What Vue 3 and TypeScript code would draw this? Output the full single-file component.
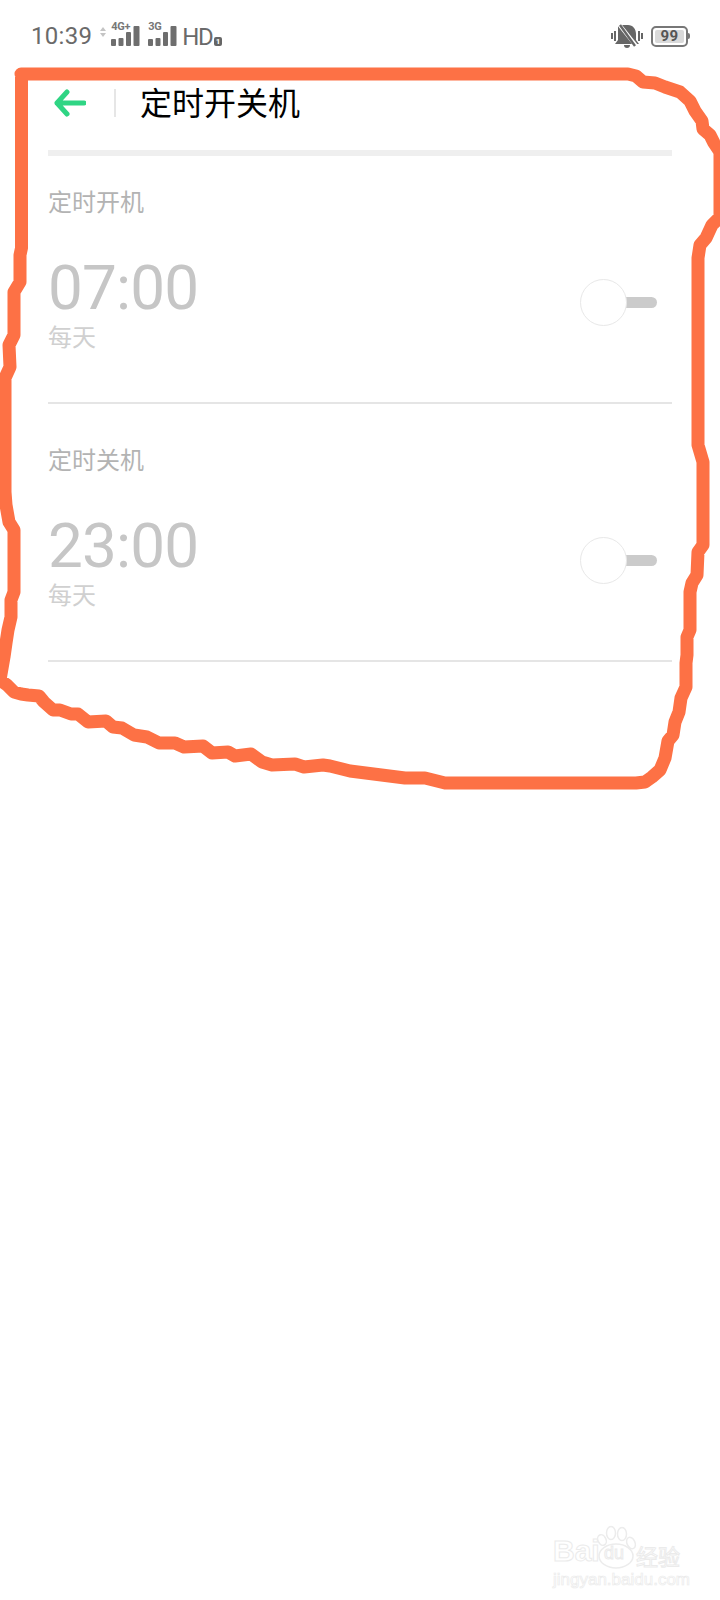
<template>
  <div class="screen">
    <div class="status-bar">
      <span class="clock">10:39</span>
      <svg class="updown" width="8" height="10" viewBox="0 0 8 10">
        <path d="M4 0 L7 4 H1 Z M4 10 L7 6 H1 Z" fill="#c4c4c4" />
      </svg>
      <div v-for="net in networks" :key="net.label" class="signal">
        <span class="net-label">{{ net.label }}</span>
        <svg width="29" height="20" viewBox="0 0 29 20">
          <rect x="0" y="13" width="5" height="7" rx="1" fill="#6e6e6e" />
          <rect x="7.5" y="12" width="5" height="8" rx="1" fill="#6e6e6e" />
          <rect x="15" y="6" width="5" height="14" rx="1" fill="#6e6e6e" />
          <rect x="22.5" y="0" width="6" height="20" rx="1" fill="#6e6e6e" />
        </svg>
      </div>
      <span class="hd">HD</span>
      <span class="sim">1</span>
      <div class="status-right">
        <svg width="32" height="26" viewBox="0 0 32 26">
          <path d="M6 2 H16 C21 2 24 6 24 11 V17 L27 21 H3 L6 17 Z" transform="translate(1 0)" fill="#666" />
          <path d="M13 22 h6 a3 3 0 0 1 -6 0 Z" fill="#666" />
          <rect x="0" y="10" width="2" height="6" fill="#666" />
          <rect x="3" y="8" width="2" height="10" fill="#666" />
          <rect x="27" y="8" width="2" height="10" fill="#666" />
          <rect x="30" y="10" width="2" height="6" fill="#666" />
          <path d="M7 0 L26 24" stroke="#fff" stroke-width="4" />
          <path d="M9 2 L24 23" stroke="#666" stroke-width="2.4" />
        </svg>
        <div class="battery"><span class="battery-level">99</span></div>
        <span class="battery-nub"></span>
      </div>
    </div>

    <div class="app-bar">
      <svg class="back" width="32" height="28" viewBox="0 0 32 28">
        <path
          d="M13 3 L3 14 L13 25 M3 14 H30"
          fill="none"
          stroke="#2fd584"
          stroke-width="5"
          stroke-linecap="round"
          stroke-linejoin="round"
        />
      </svg>
      <span class="app-bar-sep"></span>
      <h1 class="title">定时开关机</h1>
    </div>
    <div class="top-rule"></div>

    <section v-for="item in schedules" :key="item.label" class="schedule">
      <div class="schedule-label">{{ item.label }}</div>
      <div class="schedule-row">
        <div class="schedule-info">
          <div class="schedule-time">{{ item.time }}</div>
          <div class="schedule-repeat">{{ item.repeat }}</div>
        </div>
        <div class="toggle">
          <span class="toggle-track"></span>
          <span class="toggle-knob"></span>
        </div>
      </div>
    </section>

    <!-- hand drawn annotation on top of the screenshot -->
    <svg class="scribble" width="720" height="1600" viewBox="0 0 720 1600">
      <path :d="scribblePath" fill="none" stroke="#fd7145" stroke-width="13" stroke-linejoin="round" stroke-linecap="round" />
    </svg>

    <div class="watermark">
      <div class="wm-top">
        <span class="wm-bai">Bai</span>
        <svg class="wm-paw" width="40" height="44" viewBox="0 0 40 44">
          <g fill="#fff" stroke="#ececec" stroke-width="1.5">
            <ellipse cx="5" cy="15" rx="4" ry="5.5" transform="rotate(-25 5 15)" />
            <ellipse cx="14" cy="8" rx="4.5" ry="6.5" />
            <ellipse cx="25" cy="9" rx="4.5" ry="6.5" />
            <ellipse cx="34" cy="18" rx="4" ry="6" transform="rotate(-25 34 18)" />
            <ellipse cx="19" cy="31" rx="17" ry="12" />
          </g>
        </svg>
        <span class="wm-du">du</span>
        <span class="wm-cn">经验</span>
      </div>
      <div class="wm-url">jingyan.baidu.com</div>
    </div>
  </div>
</template>

<script setup lang="ts">
interface Schedule {
  label: string
  time: string
  repeat: string
}

const networks = [{ label: '4G+' }, { label: '3G' }]

const schedules: Schedule[] = [
  { label: '定时开机', time: '07:00', repeat: '每天' },
  { label: '定时关机', time: '23:00', repeat: '每天' },
]

const scribblePoints: [number, number][] = [
  [21, 74], [628, 74], [636, 76], [643, 82], [655, 83], [665, 87], [680, 92], [690, 101], [695, 111],
  [702, 121], [703, 129], [710, 135], [714, 143], [720, 152], [720, 217], [712, 225], [706, 238],
  [700, 245], [698, 258], [698, 445], [703, 462], [703, 545], [698, 552], [697, 575], [692, 583],
  [690, 592], [690, 630], [687, 637], [687, 655], [686, 663], [686, 687], [681, 698], [679, 712],
  [675, 722], [673, 735], [668, 741], [665, 758], [660, 770], [652, 777], [645, 782], [636, 783],
  [460, 783], [445, 783], [425, 778], [405, 778], [350, 771], [330, 766], [323, 765], [304, 767],
  [295, 764], [272, 765], [262, 762], [251, 754], [235, 756], [228, 752], [212, 753], [203, 746],
  [184, 747], [175, 743], [159, 743], [147, 737], [134, 735], [122, 728], [113, 727], [106, 721],
  [88, 722], [78, 714], [71, 714], [60, 710], [53, 710], [44, 702], [39, 696], [28, 695], [21, 694],
  [14, 692], [7, 685], [0, 680], [4, 657], [6, 643], [8, 630], [11, 617], [11, 600], [14, 592],
  [14, 530], [9, 522], [6, 505], [5, 492], [5, 378], [10, 367], [9, 345], [14, 335], [14, 292],
  [20, 282], [20, 255], [21.5, 248], [21.5, 74],
]

const scribblePath = 'M' + scribblePoints.map(([x, y]) => `${x} ${y}`).join(' L')
</script>

<style scoped>
.screen {
  position: relative;
  width: 720px;
  height: 1600px;
  overflow: hidden;
  background: #fff;
  font-family: Roboto, "Noto Sans CJK SC", sans-serif;
}

.status-bar {
  height: 72px;
  box-sizing: border-box;
  padding: 0 30px 0 31px;
  display: flex;
  align-items: center;
  color: #6a6a6a;
}

.clock {
  font-size: 24px;
  letter-spacing: 0.3px;
}

.updown {
  margin: -8px 4px 0 7px;
}

.signal {
  position: relative;
  width: 29px;
  height: 20px;
  margin-right: 8px;
  margin-top: 14px;
}

.signal svg {
  position: absolute;
  left: 0;
  top: -7px;
}

.net-label {
  position: absolute;
  left: 0;
  top: -11px;
  font-size: 11px;
  line-height: 10px;
  font-weight: 700;
  letter-spacing: -0.3px;
  color: #777;
  background: #fff;
  padding-right: 1px;
}

.hd {
  font-size: 24px;
  letter-spacing: -1.5px;
  margin-left: -3px;
  margin-top: 2px;
}

.sim {
  width: 8px;
  height: 9px;
  margin: 11px 0 0 2px;
  border-radius: 2px;
  background: #666;
  color: #fff;
  font-size: 8px;
  line-height: 9px;
  font-weight: 700;
  text-align: center;
}

.status-right {
  margin-left: auto;
  display: flex;
  align-items: center;
}

.status-right svg {
  margin-right: 8px;
}

.battery {
  width: 37px;
  height: 21px;
  box-sizing: border-box;
  border: 2px solid #777;
  border-radius: 5px;
  padding: 2px;
  display: flex;
}

.battery-level {
  flex: 1;
  border-radius: 2px;
  background: #d9d9d9;
  color: #555;
  font-size: 15px;
  line-height: 13px;
  font-weight: 700;
  text-align: center;
  letter-spacing: 0.5px;
}

.battery-nub {
  width: 2px;
  height: 6px;
  background: #777;
  border-radius: 0 2px 2px 0;
}

.app-bar {
  height: 62px;
  display: flex;
  align-items: center;
  padding-left: 54px;
}

.back {
  flex: none;
}

.app-bar-sep {
  width: 2px;
  height: 28px;
  margin-left: 28px;
  background: #e6e6e6;
}

.title {
  margin: -5px 0 0 24px;
  font-size: 32px;
  line-height: 44px;
  font-weight: 400;
  color: #000;
  font-family: "Noto Sans CJK SC", sans-serif;
}

.top-rule {
  height: 6px;
  margin: 16px 48px 0;
  background: #efefef;
}

.schedule {
  margin: 0 48px;
  padding: 38px 0 52px;
  border-bottom: 2px solid #e5e5e5;
}

.top-rule + .schedule {
  padding-top: 28px;
}

.schedule-label {
  font-size: 24px;
  line-height: 34px;
  color: #b3b3b3;
  font-family: "Noto Sans CJK SC", sans-serif;
}

.schedule-row {
  margin-top: 36px;
  display: flex;
  align-items: center;
  justify-content: space-between;
}

.schedule-time {
  font-size: 62px;
  line-height: 68px;
  font-weight: 400;
  letter-spacing: -0.8px;
  color: #c6c6c6;
}

.schedule-repeat {
  font-size: 24px;
  line-height: 28px;
  color: #d0d0d0;
  font-family: "Noto Sans CJK SC", sans-serif;
}

.toggle {
  position: relative;
  width: 77px;
  height: 47px;
  margin-right: 15px;
}

.toggle-track {
  position: absolute;
  right: 0;
  top: 18px;
  width: 40px;
  height: 11px;
  border-radius: 0 6px 6px 0;
  background: #cbcbcb;
}

.toggle-knob {
  position: absolute;
  left: 0;
  top: 0;
  width: 47px;
  height: 47px;
  box-sizing: border-box;
  border: 1.5px solid #e8e8e8;
  border-radius: 50%;
  background: #fff;
}

.scribble {
  position: absolute;
  left: 0;
  top: 0;
  pointer-events: none;
}

.watermark {
  position: absolute;
  left: 553px;
  top: 1525px;
  width: 135px;
}

.wm-top {
  position: relative;
  height: 44px;
}

.wm-bai,
.wm-du,
.wm-cn {
  position: absolute;
  color: #fff;
  -webkit-text-stroke: 1px #ebebeb;
}

.wm-bai {
  left: 0;
  top: 10px;
  font-family: "Liberation Sans", sans-serif;
  font-size: 30px;
  line-height: 32px;
  font-weight: 700;
}

.wm-paw {
  position: absolute;
  left: 44px;
  top: 0;
}

.wm-du {
  left: 51px;
  top: 18px;
  font-family: "Liberation Sans", sans-serif;
  font-size: 18px;
  line-height: 20px;
}

.wm-cn {
  left: 83px;
  top: 17px;
  font-size: 22px;
  line-height: 26px;
  font-family: "Noto Sans CJK SC", sans-serif;
}

.wm-url {
  margin-top: 1px;
  font-family: "Liberation Sans", sans-serif;
  font-size: 17px;
  line-height: 20px;
  color: #fff;
  -webkit-text-stroke: 0.7px #ebebeb;
  white-space: nowrap;
}
</style>
